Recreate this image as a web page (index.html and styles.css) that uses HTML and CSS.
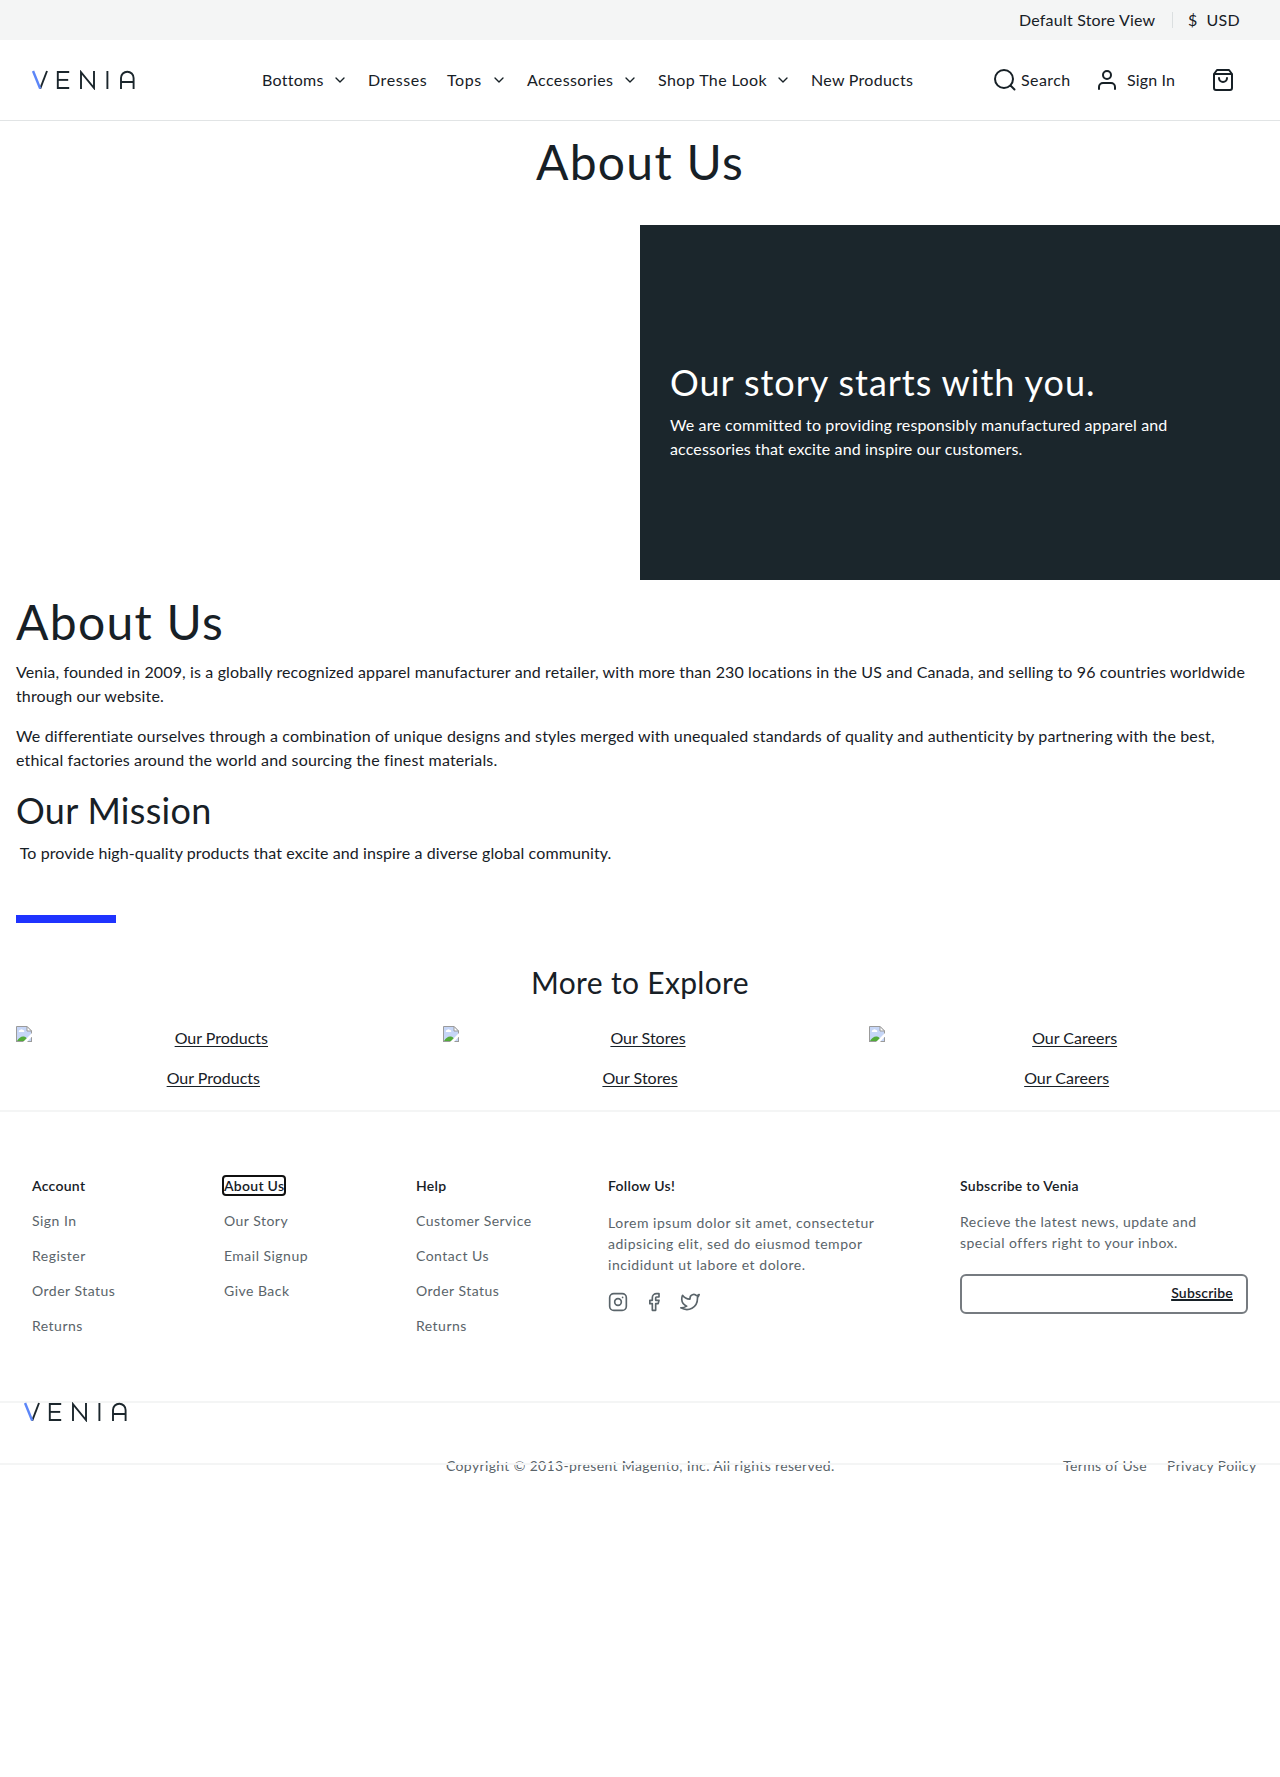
FILE: index.html
```
<!DOCTYPE html>
<html lang="en">
<head>
<meta charset="utf-8">
<title>About Us - Venia</title>
<link rel="stylesheet" href="styles.css">
</head>
<body>
<svg class="defs" aria-hidden="true">
  <symbol id="logo" viewBox="0 0 104 20">
    <g fill="none" stroke="#1b262c" stroke-width="1.9" stroke-linecap="butt">
      <line x1="15" y1="1" x2="8.2" y2="18.6"/>
      <line x1="1" y1="1" x2="8.2" y2="18.6" stroke="#5c86f8" stroke-width="2.5"/>
      <polyline points="37.2,2 25.8,2 25.8,18 37.2,18"/>
      <line x1="25.8" y1="9.9" x2="36.2" y2="9.9"/>
      <polyline points="49,19 49,2.2 62,18 62,1"/>
      <line x1="75.4" y1="1" x2="75.4" y2="19"/>
      <path d="M89 19V8a6.2 6.2 0 0 1 12.6 0v11M89 12h12.6"/>
    </g>
  </symbol>
  <symbol id="chevron" viewBox="0 0 24 24"><polyline points="6 9 12 15 18 9"/></symbol>
  <symbol id="broken" viewBox="0 0 16 16">
    <path d="M.5.5h10.500l4.500 4.500v10.500H.5z" fill="#c6d6f7"/>
    <path d="M3 6a1.300 1.300 0 0 1 1-2 1.800 1.800 0 0 1 3 0 1.200 1.200 0 0 1 1 2z" fill="#fff"/>
    <path d="M1 15c2-3.500 4.500-5 7-4.500 2 .4 3.500 2 4 4.500z" fill="#53ab3a"/>
    <path d="M.5 16V.5h10.500l4.500 4.500V16M0 15.500h16" fill="none" stroke="#9b9b9b"/>
    <path d="M11 .5v4.500h4.500z" fill="#fff" stroke="#9b9b9b"/>
    <path d="M7 16 16 7v3.500L11 16z" fill="#fff"/>
  </symbol>
</svg>

<div class="topbar">
  <span class="store">Default Store View</span>
  <span class="currency"><span>$</span><span class="usd">USD</span></span>
</div>

<header class="header">
  <svg class="logo"><use href="#logo"/></svg>
  <nav class="nav">
    <a class="tight">Bottoms<svg class="icon"><use href="#chevron"/></svg></a>
    <a class="loose">Dresses</a>
    <a class="loose">Tops<svg class="icon"><use href="#chevron"/></svg></a>
    <a>Accessories<svg class="icon"><use href="#chevron"/></svg></a>
    <a>Shop The Look<svg class="icon"><use href="#chevron"/></svg></a>
    <a class="tight">New Products</a>
  </nav>
  <div class="actions">
    <a class="search"><svg class="icon" viewBox="0 0 24 24"><circle cx="11" cy="11" r="9"/><path d="m21.500 21.500-4-4"/></svg>Search</a>
    <a class="account"><svg class="icon" viewBox="0 0 24 24"><path d="M20 21v-2a4 4 0 0 0-4-4H8a4 4 0 0 0-4 4v2"/><circle cx="12" cy="7" r="4"/></svg>Sign In</a>
    <a class="bag"><svg class="icon" viewBox="0 0 24 24"><path d="M6 2 3 6v14a2 2 0 0 0 2 2h14a2 2 0 0 0 2-2V6l-3-4zM3 6h18M16 10a4 4 0 0 1-8 0"/></svg></a>
  </div>
</header>

<main>
  <h1 class="page-title">About Us</h1>
  <section class="hero">
    <div class="hero-text">
      <h2>Our story starts with you.</h2>
      <p>We are committed to providing responsibly manufactured apparel and<br>accessories that excite and inspire our customers.</p>
    </div>
  </section>
  <section class="story">
    <h1>About Us</h1>
    <p>Venia, founded in 2009, is a globally recognized apparel manufacturer and retailer, with more than 230 locations in the US and Canada, and selling to 96 countries worldwide<br>through our website.</p>
    <p class="wide">We differentiate ourselves through a combination of unique designs and styles merged with unequaled standards of quality and authenticity by partnering with the best,<br>ethical factories around the world and sourcing the finest materials.</p>
    <h2>Our Mission</h2>
    <p class="mission">&nbsp;To provide high-quality products that excite and inspire a diverse global community.</p>
    <div class="rule"></div>
  </section>
  <section class="explore">
    <h3>More to Explore</h3>
    <div class="tiles">
      <div class="tile"><div class="picture"><svg><use href="#broken"/></svg><a>Our Products</a></div><a>Our Products</a></div>
      <div class="tile"><div class="picture"><svg><use href="#broken"/></svg><a>Our Stores</a></div><a>Our Stores</a></div>
      <div class="tile"><div class="picture"><svg><use href="#broken"/></svg><a>Our Careers</a></div><a>Our Careers</a></div>
    </div>
  </section>
</main>

<footer class="footer">
  <div class="columns">
    <ul><li class="title">Account</li><li>Sign In</li><li>Register</li><li>Order Status</li><li>Returns</li></ul>
    <ul><li class="title"><a class="focused">About Us</a></li><li>Our Story</li><li>Email Signup</li><li>Give Back</li></ul>
    <ul><li class="title">Help</li><li>Customer Service</li><li>Contact Us</li><li>Order Status</li><li>Returns</li></ul>
    <div class="follow">
      <div class="title">Follow Us!</div>
      <p>Lorem ipsum dolor sit amet, consectetur<br>adipsicing elit, sed do eiusmod tempor<br>incididunt ut labore et dolore.</p>
      <div class="social">
        <svg class="icon" viewBox="0 0 24 24"><rect x="2" y="2" width="20" height="20" rx="5"/><circle cx="12" cy="12" r="4"/><path d="M17.500 6.500h.01"/></svg>
        <svg class="icon" viewBox="0 0 24 24"><path d="M18 2h-3a5 5 0 0 0-5 5v3H7v4h3v8h4v-8h3l1-4h-4V7a1 1 0 0 1 1-1h3z"/></svg>
        <svg class="icon" viewBox="0 0 24 24"><path d="M23 3a10.900 10.900 0 0 1-3.140 1.530 4.480 4.480 0 0 0-7.860 3v1A10.660 10.660 0 0 1 3 4s-4 9 5 13a11.640 11.640 0 0 1-7 2c9 5 20 0 20-11.500a4.500 4.500 0 0 0-.08-.83A7.720 7.720 0 0 0 23 3z"/></svg>
      </div>
    </div>
    <div class="subscribe">
      <div class="title">Subscribe to Venia</div>
      <p>Recieve the latest news, update and<br>special offers right to your inbox.</p>
      <div class="field"><a>Subscribe</a></div>
    </div>
  </div>
  <div class="bottom">
    <svg class="logo"><use href="#logo"/></svg>
    <div class="legal">
      <span class="copyright">Copyright © 2013-present Magento, Inc. All rights reserved.</span>
      <span class="terms">Terms of Use</span>
      <span>Privacy Policy</span>
    </div>
    <div class="line"></div>
  </div>
</footer>
</body>
</html>
```
FILE: styles.css
```
* { box-sizing: border-box; }
body { margin: 0; min-height: 1777px; background: #fff; color: #172026; font: 16px/24px Lato, "Open Sans", sans-serif; letter-spacing: .13px; }
h1, h2, h3, p, ul { margin: 0; padding: 0; font-weight: 400; white-space: nowrap; }
ul { list-style: none; }
svg { display: block; flex: none; }
.defs { position: absolute; width: 0; height: 0; }
.icon { width: 24px; height: 24px; fill: none; stroke: currentColor; stroke-width: 2; stroke-linecap: round; stroke-linejoin: round; }
.logo { width: 104px; height: 20px; }

.topbar { display: flex; height: 40px; align-items: center; padding-left: 1019px; background: #f4f5f5; letter-spacing: .21px; }
.store { width: 153px; }
.currency { display: flex; height: 16px; align-items: center; padding-left: 15px; border-left: 1px solid #dbdfe0; }
.usd { margin-left: 9px; letter-spacing: .3px; }

.header { display: flex; align-items: center; height: 81px; padding-left: 32px; border-bottom: 1px solid #e1e4e5; letter-spacing: .4px; }
.nav { display: grid; grid-template-columns: 86px 59px 60px 111px 133px 110px; column-gap: 20px; margin-left: 126px; white-space: nowrap; }
.nav a { display: flex; align-items: center; justify-content: space-between; }
.nav .icon { width: 16px; height: 16px; }
.nav .tight { letter-spacing: .28px; }
.nav .loose { letter-spacing: .6px; }
.actions { display: flex; margin-left: 72px; white-space: nowrap; }
.actions a { display: flex; align-items: center; }
.search { gap: 4px; width: 102px; }
.account { gap: 8px; width: 116px; letter-spacing: .15px; }

h1 { font-size: 48px; line-height: 60px; letter-spacing: 1.3px; }
h2 { font-size: 36px; line-height: 45px; }
.page-title { padding: 11px 0 33px; text-align: center; }
.hero { display: flex; justify-content: flex-end; height: 355px; }
.hero-text { display: flex; flex-direction: column; justify-content: center; gap: 8px; width: 640px; padding: 16px 30px 0; background: #1b262c; color: #fff; }
.hero h2 { letter-spacing: .95px; }
.story { height: 343px; padding: 12px 16px 0; }
.story p { padding: 8px 0; }
.story .wide { letter-spacing: .148px; }
.story h2 { margin-top: 8px; letter-spacing: .3px; }
.story .mission { padding-top: 8px; letter-spacing: .1px; }
.rule { width: 100px; height: 8px; margin-top: 42px; background: #1f33ff; }
.explore { padding: 40px 0 0 16px; height: 187px; }
.explore h3 { margin-right: 16px; font-size: 30px; line-height: 38px; letter-spacing: .33px; text-align: center; }
.tiles { display: grid; grid-template-columns: repeat(3, 394.67px); column-gap: 32px; margin-top: 25px; text-align: center; letter-spacing: 0; }
.tile a { text-decoration: underline; text-underline-offset: 2px; }
.picture { display: flex; height: 40px; }
.picture svg { width: 16px; height: 16px; }
.picture a { flex: 1; }

.footer { border-top: 2px solid #f4f5f5; font-size: 14px; line-height: 21px; letter-spacing: .48px; color: #5a646a; }
.columns { display: grid; grid-template-columns: 192px 192px 192px 352px 288px; height: 289px; padding: 63px 0 0 32px; }
.columns li { margin-bottom: 14px; }
.title { color: #172026; font-weight: 600; letter-spacing: .28px; }
.focused { border-radius: 2px; outline: 2px solid #101010; }
.follow p { margin-top: 16px; letter-spacing: .53px; }
.social { display: flex; gap: 16px; margin-top: 17px; }
.social .icon { width: 20px; height: 20px; }
.subscribe p { margin-top: 15px; }
.field { display: flex; justify-content: flex-end; height: 40px; margin-top: 21px; padding: 6px 13px 0; border: 2px solid #767b80; border-radius: 6px; color: #172026; font-weight: 600; letter-spacing: .2px; }
.field a { text-decoration: underline; text-decoration-thickness: 2px; text-underline-offset: 1px; }
.bottom { border-top: 2px solid #f4f5f5; }
.bottom .logo { margin: -1px 0 0 24px; }
.legal { display: flex; height: 41px; margin-top: 33px; padding-left: 446px; letter-spacing: .36px; white-space: nowrap; }
.copyright { width: 617px; }
.terms { width: 104px; }
.line { height: 2px; margin-top: -33px; background: #f4f5f5; position: relative; }
```
